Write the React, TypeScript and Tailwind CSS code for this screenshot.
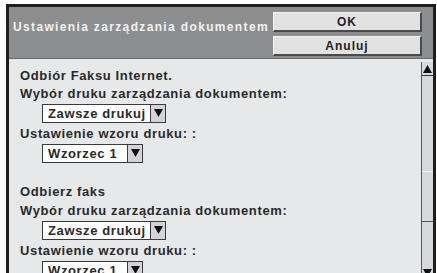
import React from 'react';

const Arrow = ({ up = false }: { up?: boolean }) => (
  <svg width="9" height="8" viewBox="0 0 9 8" className="block">
    {up ? <polygon points="0,8 9,8 4.5,0" fill="#111" /> : <polygon points="0,0 9,0 4.5,8" fill="#111" />}
  </svg>
);

const Select = ({ value, width }: { value: string; width: string }) => (
  <div className="flex h-[19px] border border-[#3a3a3a] bg-white">
    <div className={`${width} flex items-center whitespace-nowrap pl-[5px] leading-none`}>{value}</div>
    <div className="flex w-[15px] items-center justify-center border-l border-[#3a3a3a] bg-[#d4d4d6]">
      <Arrow />
    </div>
  </div>
);

const Section = ({ title, tall = false }: { title: string; tall?: boolean }) => (
  <div>
    <div className={tall ? 'h-[20px] leading-[20px]' : 'h-[18px] leading-[18px]'}>{title}</div>
    <div className="h-[18px] leading-[18px]">Wybór druku zarządzania dokumentem:</div>
    <div className="flex h-[20px] items-center pl-[22px]">
      <Select value="Zawsze drukuj" width="w-[107px]" />
    </div>
    <div className="mt-[2px] h-[18px] leading-[18px]">Ustawienie wzoru druku: :</div>
    <div className="flex h-[20px] items-center pl-[22px]">
      <Select value="Wzorzec 1" width="w-[84px]" />
    </div>
  </div>
);

export default function App() {
  return (
    <div className="h-[273px] w-[437px] bg-white pl-[6px] pr-[1px] pt-[4px]" style={{ fontFamily: '"Liberation Sans", Arial, sans-serif' }}>
      <div className="flex h-[269px] flex-col overflow-hidden border-[3px] border-b-0 border-[#1e1e1e]">
        {/* header */}
        <div className="flex h-[52px] shrink-0 items-start justify-between border-b border-[#6a6a6c] bg-[#8d8e90] pr-[3px]">
          <div className="pl-[4px] pt-[11px] text-[12px] font-bold tracking-[1.35px] text-[#f2f2f2]">
            Ustawienia zarządzania dokumentem
          </div>
          <div className="flex flex-col gap-[4px] pt-[5px] pr-[8px]">
            <button className="h-[20px] w-[149px] border-b-2 border-r-2 border-l border-t border-b-[#4a4a4a] border-r-[#4a4a4a] border-l-[#f4f4f4] border-t-[#f4f4f4] bg-[#e2e2e3] text-[12px] font-bold tracking-[1px] text-[#222]">
              OK
            </button>
            <button className="h-[20px] w-[149px] border-b-2 border-r-2 border-l border-t border-b-[#4a4a4a] border-r-[#4a4a4a] border-l-[#f4f4f4] border-t-[#f4f4f4] bg-[#e2e2e3] text-[12px] font-bold tracking-[1px] text-[#222]">
              Anuluj
            </button>
          </div>
        </div>
        {/* content */}
        <div className="flex flex-1 bg-[#e7e8ea]">
          <div className="flex-1 pl-[11px] pt-[8px] text-[13px] font-bold tracking-[0.63px] text-[#2a2a2a]">
            <Section title="Odbiór Faksu Internet." />
            <div className="h-[19px]" />
            <Section title="Odbierz faks" tall />
          </div>
          <div className="mt-[3px] flex w-[12px] flex-col border-l border-[#555] bg-[#d8d9db]">
            <div className="flex h-[14px] items-center justify-center border-b border-[#333]">
              <Arrow up />
            </div>
            <div className="h-[96px] border-b border-[#f2f2f2]" />
            <div className="h-[50px] border-b border-[#555]" />
            <div className="flex flex-1 items-end justify-center pb-[3px]">
              <Arrow />
            </div>
          </div>
        </div>
      </div>
    </div>
  );
}
